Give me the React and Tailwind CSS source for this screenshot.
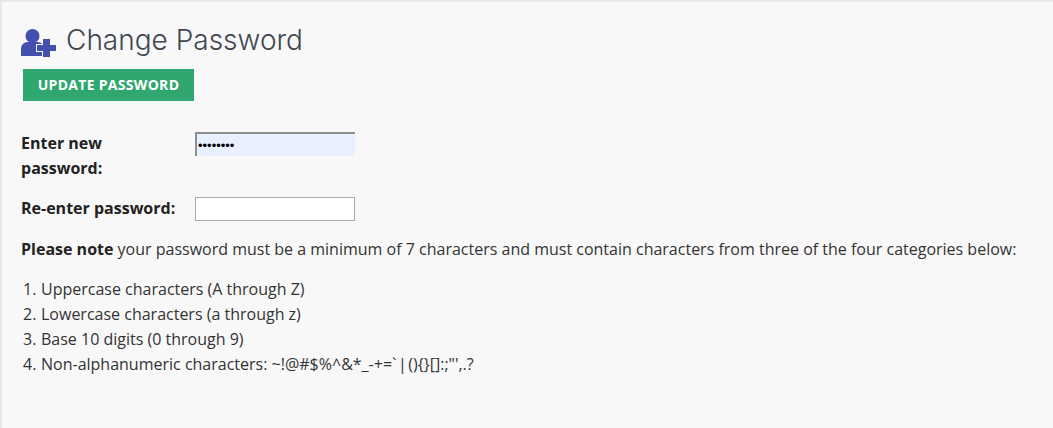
import React from 'react'

const RULES = [
  'Uppercase characters (A through Z)',
  'Lowercase characters (a through z)',
  'Base 10 digits (0 through 9)',
]

function UserPlusIcon() {
  return (
    <svg width="37" height="30" viewBox="0 0 37 30" className="shrink-0 mt-[6px] -ml-[1px]">
      <circle cx="12.500" cy="8" r="7" fill="#4350af" />
      <path d="M1 28v-7c0-4 3-7 6.500-7h10c4 0 7 3 7 7v7z" fill="#4350af" />
      <path d="M23 11h7v6h6v6h-6v6h-7v-6h-6v-6h6z" fill="#4350af" stroke="#f8f8f8" strokeWidth="2" paintOrder="stroke" />
    </svg>
  )
}

export default function App() {
  return (
    <div className="h-[428px] w-[1053px] overflow-hidden bg-[#f8f8f8] border-t-2 border-l-2 border-[#e8e8e8] font-['Open_Sans',sans-serif] text-[16px] text-[#333]">
      <div className="pl-[19px] pt-[21px]">
        <div className="flex items-center gap-[9px] h-[34px]">
          <UserPlusIcon />
          <h1 className="font-['Inter',sans-serif] font-light text-[28px] text-[#3f4650]">Change Password</h1>
        </div>

        <button className="block ml-[2px] mt-[12px] w-[171px] h-[32px] pb-[2px] bg-[#2fa76f] text-white font-bold text-[14px] tracking-[0.3px]">
          UPDATE PASSWORD
        </button>

        <div className="mt-[30px] flex">
          <label className="w-[174px] font-bold text-[#222] leading-[25px] pr-[50px]">Enter new password:</label>
          <input
            type="password"
            defaultValue="12345678"
            className="mt-[1px] w-[160px] h-[24px] bg-[#e8f0fe] border-t-2 border-l-2 border-[#8f8f8f] px-[1px] font-['Liberation_Sans',sans-serif] text-[13px] text-black outline-none"
          />
        </div>

        <div className="mt-[15px] flex">
          <label className="w-[174px] font-bold text-[#222] leading-[25px]">Re-enter password:</label>
          <input type="password" className="mt-[1px] w-[160px] h-[24px] bg-white border border-[#a9a9a9] outline-none" />
        </div>

        <p className="mt-[16px] leading-[25px] whitespace-nowrap">
          <span className="font-bold text-[#222]">Please note</span> your password must be a minimum of 7 characters and must contain characters from three of the four categories below:
        </p>

        <ol className="mt-[15px] ml-[2px]">
          {RULES.map((rule, i) => (
            <li key={rule} className="flex leading-[25px]">
              <span className="w-[18px]">{i + 1}.</span>{rule}
            </li>
          ))}
          <li className="flex leading-[25px]">
            <span className="w-[18px]">4.</span>
            <span>Non-alphanumeric characters: ~!@#$%^&amp;*_-+=`<span className="px-[1.500px]">|</span>(){'{}'}[]:;"',.?</span>
          </li>
        </ol>
      </div>
    </div>
  )
}
